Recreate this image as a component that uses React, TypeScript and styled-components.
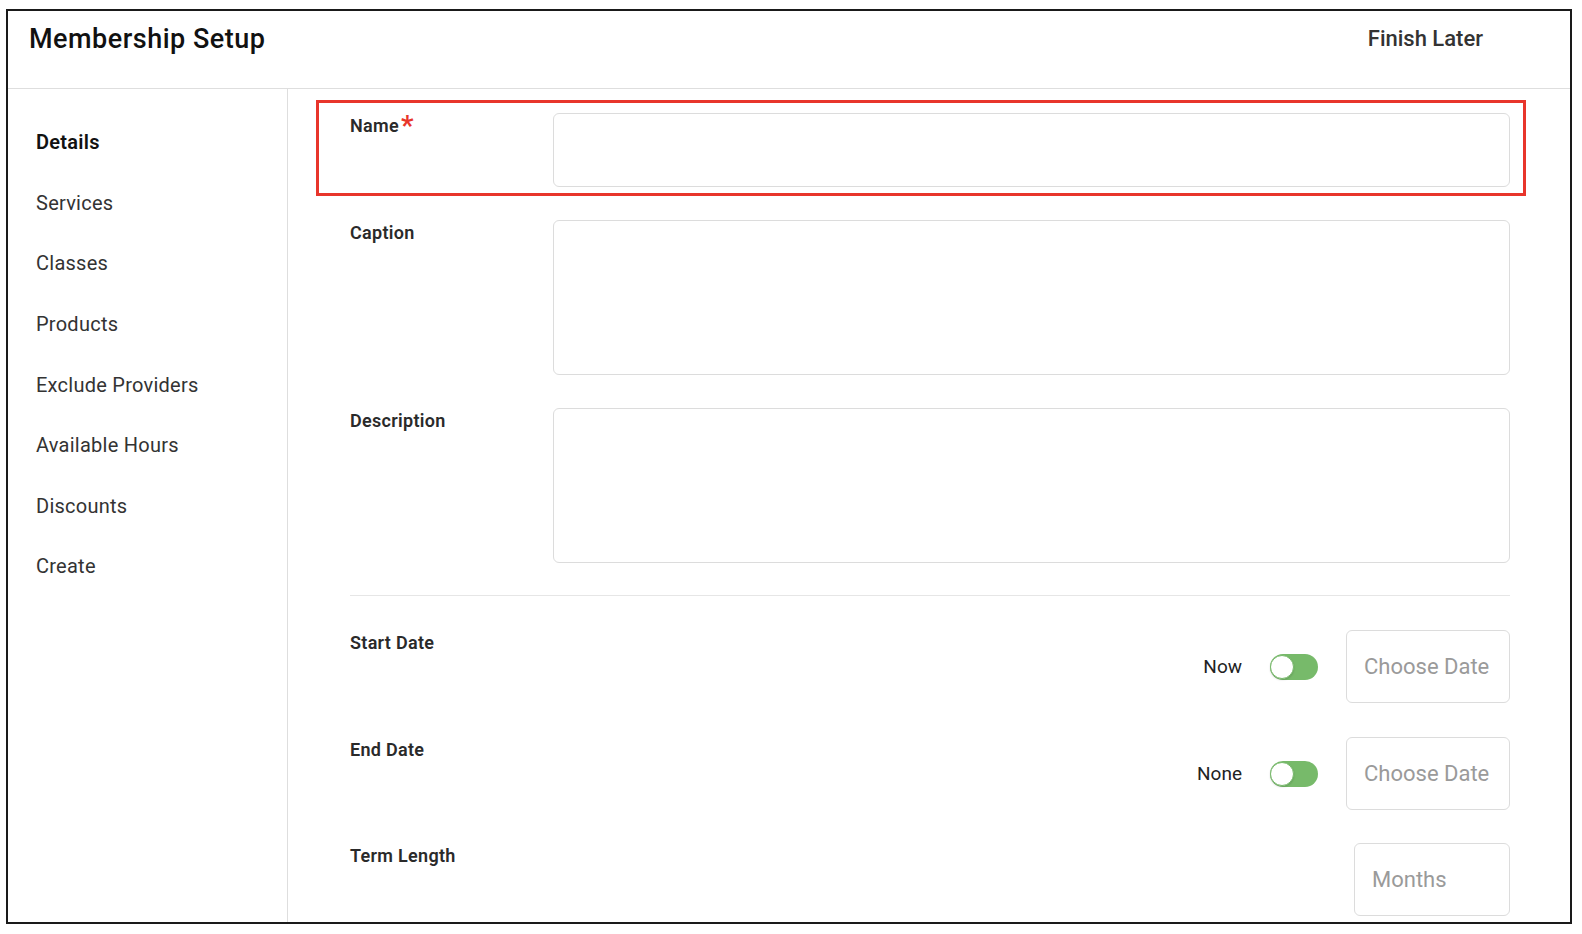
import React from 'react'
import styled, { createGlobalStyle } from 'styled-components'

const GlobalStyle = createGlobalStyle`
  * { box-sizing: border-box; }
  body {
    margin: 0;
    background: #ffffff;
    font-family: Roboto, "Liberation Sans", Arial, sans-serif;
    color: #222;
  }
`

const Frame = styled.div`
  margin: 9px 0 0 6px;
  width: 1566px;
  height: 915px;
  border: 2px solid #1a1a1a;
  display: flex;
  flex-direction: column;
  overflow: hidden;
`

const Header = styled.header`
  height: 78px;
  flex-shrink: 0;
  display: flex;
  align-items: flex-start;
  justify-content: space-between;
  padding: 12px 87px 0 21px;
  border-bottom: 1px solid #dedede;
`

const Title = styled.h1`
  margin: 0;
  font-size: 27px;
  line-height: 32px;
  letter-spacing: 0.5px;
  font-weight: 500;
  color: #111;
`

const FinishLater = styled.button`
  background: none;
  border: none;
  padding: 0;
  margin-top: 2px;
  font-family: inherit;
  font-size: 22px;
  line-height: 28px;
  font-weight: 500;
  color: #333;
  cursor: pointer;
`

const Body = styled.div`
  flex: 1;
  display: flex;
`

const Sidebar = styled.nav`
  width: 280px;
  flex-shrink: 0;
  border-right: 1px solid #dedede;
  padding: 23px 0 0 28px;
`

const NavItem = styled.div<{ $active?: boolean }>`
  height: 60.6px;
  display: flex;
  align-items: center;
  font-size: 20px;
  letter-spacing: 0.25px;
  font-weight: ${p => (p.$active ? 600 : 400)};
  color: ${p => (p.$active ? '#111' : '#333')};
  cursor: pointer;
`

const Main = styled.main`
  flex: 1;
  padding: 11px 0 0 62px;
`

const Form = styled.div`
  width: 1160px;
  display: flex;
  flex-direction: column;
`

const Highlight = styled.div`
  margin-left: -34px;
  width: 1210px;
  border: 3px solid #e8352b;
  padding: 10px 13px 6px 31px;
`

const Row = styled.div<{ $gap?: number }>`
  display: flex;
  align-items: flex-start;
  margin-top: ${p => p.$gap ?? 0}px;
`

const Label = styled.label`
  width: 203px;
  flex-shrink: 0;
  padding-top: 2px;
  font-size: 18px;
  line-height: 22px;
  letter-spacing: 0.3px;
  font-weight: 600;
  color: #2a2a2a;
`

const Required = styled.span`
  color: #e8352b;
  font-size: 28px;
  line-height: 0;
  position: relative;
  top: 3px;
  margin-left: 2px;
  font-weight: 600;
`

const Field = styled.div<{ $height: number }>`
  flex: 1;
  height: ${p => p.$height}px;
  border: 1px solid #dcdcdc;
  border-radius: 6px;
  background: #fff;
`

const Divider = styled.hr`
  margin: 32px 0 0;
  border: none;
  border-top: 1px solid #e6e6e6;
`

const Controls = styled.div`
  flex: 1;
  display: flex;
  align-items: center;
  justify-content: flex-end;
`

const OptionText = styled.span`
  font-size: 19px;
  color: #222;
  margin-right: 28px;
`

const Toggle = styled.div`
  width: 48px;
  height: 26px;
  border-radius: 13px;
  background: #77ba6a;
  position: relative;
  margin-right: 28px;
  &::after {
    content: '';
    position: absolute;
    left: 0;
    top: 1px;
    width: 24px;
    height: 24px;
    border-radius: 50%;
    background: #fff;
    border: 1px solid #77ba6a;
    box-sizing: border-box;
    box-shadow: 0 1px 2px rgba(0, 0, 0, 0.15);
  }
`

const Picker = styled.div<{ $width: number }>`
  width: ${p => p.$width}px;
  height: 73px;
  border: 1px solid #dcdcdc;
  border-radius: 6px;
  display: flex;
  align-items: center;
  padding-left: 17px;
  font-size: 22px;
  color: #9a9a9a;
`

const navItems = [
  'Details',
  'Services',
  'Classes',
  'Products',
  'Exclude Providers',
  'Available Hours',
  'Discounts',
  'Create',
]

export default function App() {
  return (
    <>
      <GlobalStyle />
      <Frame>
        <Header>
          <Title>Membership Setup</Title>
          <FinishLater>Finish Later</FinishLater>
        </Header>
        <Body>
          <Sidebar>
            {navItems.map((item, i) => (
              <NavItem key={item} $active={i === 0}>
                {item}
              </NavItem>
            ))}
          </Sidebar>
          <Main>
            <Form>
              <Highlight>
                <Row>
                  <Label>
                    Name<Required>*</Required>
                  </Label>
                  <Field $height={74} />
                </Row>
              </Highlight>
              <Row $gap={24}>
                <Label>Caption</Label>
                <Field $height={155} />
              </Row>
              <Row $gap={33}>
                <Label>Description</Label>
                <Field $height={155} />
              </Row>
              <Divider />
              <Row $gap={34}>
                <Label>Start Date</Label>
                <Controls>
                  <OptionText>Now</OptionText>
                  <Toggle />
                  <Picker $width={164}>Choose Date</Picker>
                </Controls>
              </Row>
              <Row $gap={34}>
                <Label>End Date</Label>
                <Controls>
                  <OptionText>None</OptionText>
                  <Toggle />
                  <Picker $width={164}>Choose Date</Picker>
                </Controls>
              </Row>
              <Row $gap={33}>
                <Label>Term Length</Label>
                <Controls>
                  <Picker $width={156}>Months</Picker>
                </Controls>
              </Row>
            </Form>
          </Main>
        </Body>
      </Frame>
    </>
  )
}
